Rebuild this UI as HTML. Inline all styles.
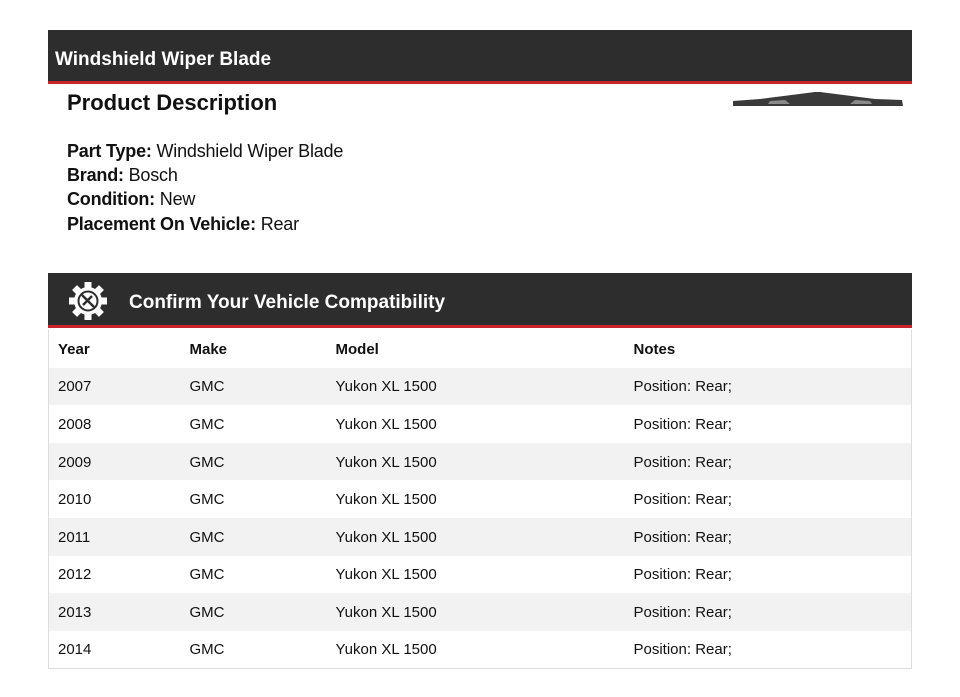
<!DOCTYPE html>
<html><head><style>
body{margin:0;background:#fff;font-family:"Liberation Sans",Arial,sans-serif;color:#111;}
.bar{position:absolute;left:48px;width:864px;background:#2d2d2d;border-bottom:3px solid #c8222a;color:#fff;font-weight:bold;box-sizing:border-box;}
table{position:absolute;left:48px;top:330px;width:864px;border-collapse:collapse;border:1px solid #ddd;border-top:none;font-size:15px;}
td,th{height:37.6px;padding:1px 0 0 9px;text-align:left;box-sizing:border-box;}
th{font-weight:bold;}
tr:nth-child(even) td{background:#f2f2f2;}
.pd{position:absolute;left:67px;font-size:18px;line-height:24.2px;top:139px;letter-spacing:-0.2px;}
</style></head><body>
<div class="bar" style="top:30px;height:54px;font-size:19px;padding:19px 0 0 7px;">Windshield Wiper Blade</div>
<div style="position:absolute;left:67px;top:90px;font-size:22px;font-weight:bold;">Product Description</div>
<svg style="position:absolute;left:730px;top:88px" width="176" height="24" viewBox="0 0 176 24">
<path d="M3 13 L30 11 L85 4 L90 4 L145 11 L172 12 L173 18 L3 18 Z" fill="#3a3a3a"/>
<path d="M40 13 L55 12 L60 16 L38 16 Z M120 16 L125 12 L140 13 L142 16 Z" fill="#8a8a8a"/>
</svg>
<div class="pd"><b>Part Type:</b> Windshield Wiper Blade<br><b>Brand:</b> Bosch<br><b>Condition:</b> New<br><b>Placement On Vehicle:</b> Rear</div>
<div class="bar" style="top:273px;height:55px;font-size:19px;padding:19px 0 0 81px;">Confirm Your Vehicle Compatibility</div>
<svg style="position:absolute;left:68px;top:281px" width="40" height="40" viewBox="0 0 40 40">
<g fill="#fff"><circle cx="20" cy="20" r="14"/>
<g id="t"><rect x="16.5" y="1" width="7" height="7"/></g>
<use href="#t" transform="rotate(45 20 20)"/><use href="#t" transform="rotate(90 20 20)"/><use href="#t" transform="rotate(135 20 20)"/><use href="#t" transform="rotate(180 20 20)"/><use href="#t" transform="rotate(225 20 20)"/><use href="#t" transform="rotate(270 20 20)"/><use href="#t" transform="rotate(315 20 20)"/></g>
<circle cx="20" cy="20" r="9.5" fill="none" stroke="#2d2d2d" stroke-width="2"/>
<path d="M14 14 L26 26 M15 24 L24 15" stroke="#2d2d2d" stroke-width="2.5"/>
</svg>
<table>
<tr><th style="width:132px">Year</th><th style="width:146px">Make</th><th style="width:298px">Model</th><th>Notes</th></tr>
<tr><td>2007</td><td>GMC</td><td>Yukon XL 1500</td><td>Position: Rear;</td></tr>
<tr><td>2008</td><td>GMC</td><td>Yukon XL 1500</td><td>Position: Rear;</td></tr>
<tr><td>2009</td><td>GMC</td><td>Yukon XL 1500</td><td>Position: Rear;</td></tr>
<tr><td>2010</td><td>GMC</td><td>Yukon XL 1500</td><td>Position: Rear;</td></tr>
<tr><td>2011</td><td>GMC</td><td>Yukon XL 1500</td><td>Position: Rear;</td></tr>
<tr><td>2012</td><td>GMC</td><td>Yukon XL 1500</td><td>Position: Rear;</td></tr>
<tr><td>2013</td><td>GMC</td><td>Yukon XL 1500</td><td>Position: Rear;</td></tr>
<tr><td>2014</td><td>GMC</td><td>Yukon XL 1500</td><td>Position: Rear;</td></tr>
</table>
</body></html>
